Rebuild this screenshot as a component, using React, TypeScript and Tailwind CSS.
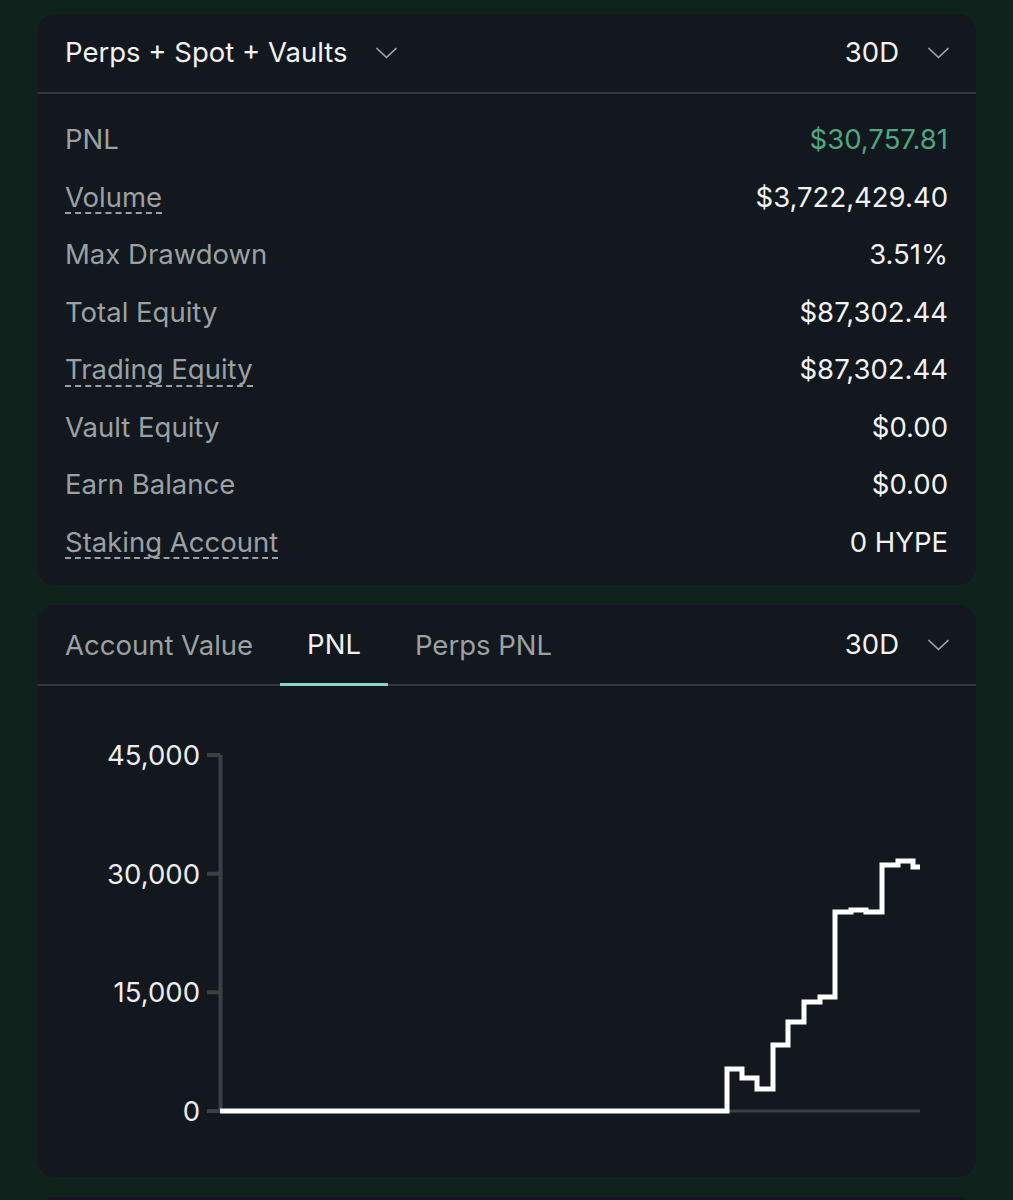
import React, { useState } from 'react';

const stats = [
  { label: 'PNL', value: '$30,757.81', green: true },
  { label: 'Volume', value: '$3,722,429.40', dashed: true },
  { label: 'Max Drawdown', value: '3.51%' },
  { label: 'Total Equity', value: '$87,302.44' },
  { label: 'Trading Equity', value: '$87,302.44', dashed: true },
  { label: 'Vault Equity', value: '$0.00' },
  { label: 'Earn Balance', value: '$0.00' },
  { label: 'Staking Account', value: '0 HYPE', dashed: true },
];

const tabs = ['Account Value', 'PNL', 'Perps PNL'];

// step points of the pnl line, in chart pixels
const line: [number, number][] = [
  [183, 425], [690, 425], [690, 383], [705, 383], [705, 392], [720, 392],
  [720, 403], [736, 403], [736, 359], [751, 359], [751, 336], [767, 336],
  [767, 316], [783, 316], [783, 311], [798, 311], [798, 226], [814, 226],
  [814, 224], [829, 224], [829, 226], [845, 226], [845, 179], [861, 179],
  [861, 175], [876, 175], [876, 181], [883, 181],
];

const ticks = [
  { label: '45,000', y: 69 },
  { label: '30,000', y: 187.7 },
  { label: '15,000', y: 306.3 },
  { label: '0', y: 425 },
];

function Chevron() {
  return (
    <svg width="21" height="12" viewBox="0 0 21 12" fill="none" className="shrink-0">
      <polyline points="1,1.5 10.5,10.5 20,1.5" stroke="#a3a8ab" strokeWidth="1.7" strokeLinecap="round" strokeLinejoin="round" />
    </svg>
  );
}

function PnlChart() {
  const d = line.map(([x, y], i) => `${i === 0 ? 'M' : 'L'}${x} ${y}`).join(' ');
  return (
    <svg viewBox="0 0 939 491" className="block w-full h-[491px]">
      <line x1="183.5" y1="69" x2="183.5" y2="427" stroke="#3c3f43" strokeWidth="4" />
      <line x1="183.5" y1="425" x2="883" y2="425" stroke="#3c3f43" strokeWidth="3" />
      {ticks.map(t => (
        <g key={t.label}>
          <line x1="170" y1={t.y} x2="183.5" y2={t.y} stroke="#3c3f43" strokeWidth="4" />
          <text
            x="163"
            y={t.y}
            textAnchor="end"
            dominantBaseline="central"
            fill="#ececec"
            fontSize="27.5"
            fontFamily="Inter, 'Liberation Sans', sans-serif"
          >
            {t.label}
          </text>
        </g>
      ))}
      <path d={d} fill="none" stroke="#ffffff" strokeWidth="5" strokeLinejoin="miter" />
    </svg>
  );
}

export default function App() {
  const [tab, setTab] = useState('PNL');

  return (
    <div className="min-h-screen bg-[#0f231c] px-[37px] pt-[14px] font-['Inter','Liberation_Sans',sans-serif] text-[27.5px] leading-none">
      <div className="flex flex-col gap-[20px]">
        {/* Summary card */}
        <div className="flex h-[571px] flex-col rounded-[18px] bg-[#12181e]">
          <div className="flex h-[80px] shrink-0 items-center justify-between border-b-2 border-[#33373b] pl-[28px] pr-[27px]">
            <button className="flex items-center gap-[29px] text-[#f2f2f2]">
              <span>Perps + Spot + Vaults</span>
              <Chevron />
            </button>
            <button className="flex items-center gap-[29px] text-[#f2f2f2]">
              <span>30D</span>
              <Chevron />
            </button>
          </div>
          <div className="px-[28px] pt-[17px]">
            {stats.map(s => (
              <div key={s.label} className="flex h-[57.5px] items-center justify-between">
                <span
                  className={
                    s.dashed
                      ? 'text-[#9ba1a3] pb-[1px] -mb-[3px] border-b-2 border-dashed border-[#9ba1a3]'
                      : 'text-[#9ba1a3]'
                  }
                >
                  {s.label}
                </span>
                <span className={s.green ? 'text-[#4fa681]' : 'text-[#f2f2f2]'}>{s.value}</span>
              </div>
            ))}
          </div>
        </div>

        {/* Chart card */}
        <div className="flex h-[572px] flex-col rounded-[18px] bg-[#12181e]">
          <div className="flex h-[81px] shrink-0 items-stretch justify-between border-b-2 border-[#33373b] pr-[27px]">
            <div className="flex items-stretch">
              {tabs.map(t => (
                <button
                  key={t}
                  onClick={() => setTab(t)}
                  className={
                    t === tab
                      ? 'px-[27px] pt-[2px] -mb-[2px] border-b-[3px] border-[#86d6c8] text-[#f2f2f2]'
                      : 'px-[27px] pt-[2px] text-[#9ba1a3] first:pl-[28px]'
                  }
                >
                  {t}
                </button>
              ))}
            </div>
            <button className="flex items-center gap-[29px] text-[#f2f2f2]">
              <span>30D</span>
              <Chevron />
            </button>
          </div>
          <PnlChart />
        </div>

        <div className="h-[200px] rounded-[18px] bg-[#12181e]" />
      </div>
    </div>
  );
}
